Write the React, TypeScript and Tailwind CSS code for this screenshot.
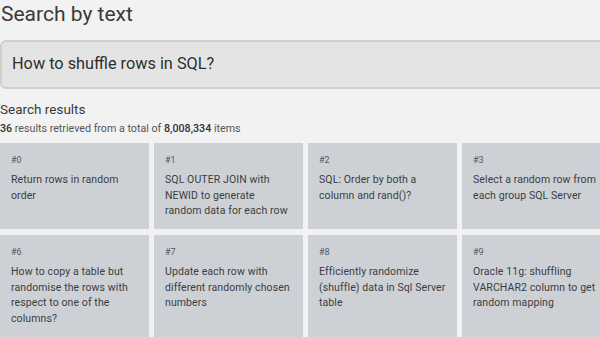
import React from "react";

const row1 = [
  { id: "#0", t: "Return rows in random order" },
  { id: "#1", t: "SQL OUTER JOIN with NEWID to generate random data for each row" },
  { id: "#2", t: "SQL: Order by both a column and rand()?" },
  { id: "#3", t: "Select a random row from each group SQL Server" },
];
const row2 = [
  { id: "#6", t: "How to copy a table but randomise the rows with respect to one of the columns?" },
  { id: "#7", t: "Update each row with different randomly chosen numbers" },
  { id: "#8", t: "Efficiently randomize (shuffle) data in Sql Server table" },
  { id: "#9", t: "Oracle 11g: shuffling VARCHAR2 column to get random mapping" },
];

function Card({ id, t }: { id: string; t: string }) {
  return (
    <div className="bg-[#cdd1d6] pt-[11px] pl-[11px] text-[#3a3d40]">
      <div className="text-[9px] leading-[12px] text-[#555a5f]">{id}</div>
      <div className="mt-[6px] w-[127px] text-[10.5px] leading-[15.5px] tracking-[0.1px]">{t}</div>
    </div>
  );
}

export default function App() {
  return (
    <div
      className="w-[600px] h-[337px] overflow-hidden bg-[#f2f2f2] text-[#333]"
      style={{ fontFamily: "Roboto, 'Noto Sans', sans-serif" }}
    >
      <div className="pl-[1px] text-[21px] leading-[28px] text-[#3a3a3a]">Search by text</div>
      <div className="mt-[12px] w-[640px] h-[49px] rounded-[6px] border-2 border-[#cfcfcf] bg-[#e5e4e4] flex items-center pl-[10px]">
        <span className="text-[16.3px] text-[#2e2e2e]">How to shuffle rows in SQL?</span>
      </div>
      <div className="mt-[10.5px] text-[13.5px] leading-[18px] text-[#3a3a3a]">Search results</div>
      <div className="mt-[4px] text-[10.7px] leading-[14px] text-[#555]">
        <span className="font-medium text-[#333]">36</span> results retrieved from a total of{" "}
        <span className="font-medium text-[#333]">8,008,334</span> items
      </div>
      <div className="mt-[7.5px] grid grid-cols-[repeat(4,149px)] grid-rows-[86px_110px] gap-x-[5px] gap-y-[6px] w-[620px]">
        {row1.map((c) => (
          <Card key={c.id} {...c} />
        ))}
        {row2.map((c) => (
          <Card key={c.id} {...c} />
        ))}
      </div>
    </div>
  );
}
